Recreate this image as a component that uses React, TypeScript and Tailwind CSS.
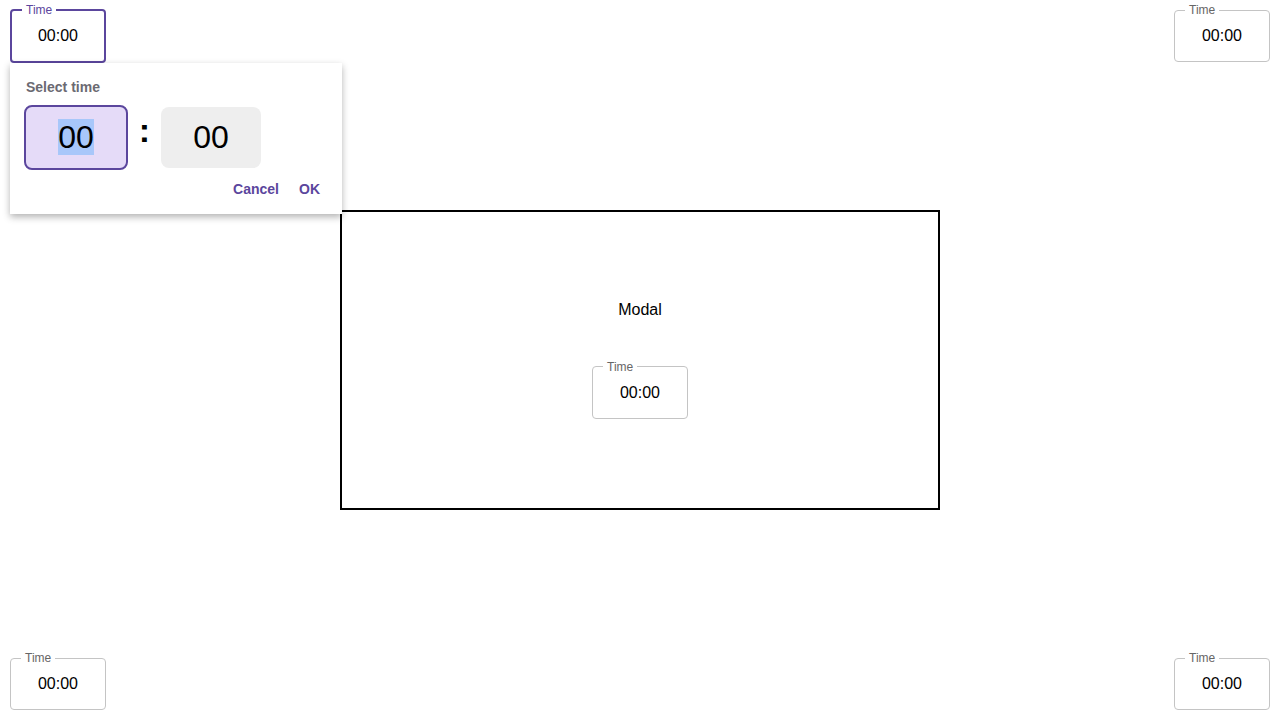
import React from 'react';

const PURPLE = 'text-[#5b469d]';

function TimeField({ active = false }: { active?: boolean }) {
  return (
    <fieldset
      className={`w-[96px] h-[59px] rounded-[4px] px-[10px] pt-[9px] pb-[13px] text-center ${
        active ? 'border-2 border-[#5b469d] px-[9px] h-[60px]' : 'border border-[#c4c4c4]'
      }`}
    >
      <legend className={`px-[4px] text-[12px] leading-[14px] text-left ${active ? PURPLE : 'text-[#666666]'}`}>
        Time
      </legend>
      <div className="text-[16px] leading-[20px] text-black">00:00</div>
    </fieldset>
  );
}

function TimePopup() {
  return (
    <div className="absolute left-0 top-[60px] z-10 w-[332px] bg-white shadow-[0_3px_7px_rgba(0,0,0,0.3)] pt-[16px] px-[14px] pb-[9px]">
      <div className="pl-[2px] text-[14px] leading-[16px] font-bold text-[#6b6a72]">Select time</div>
      <div className="mt-[10px] flex items-center">
        <div className="w-[104px] h-[65px] rounded-[8px] border-2 border-[#5b469d] bg-[#e5dbf8] flex items-center justify-center pb-[2px]">
          <span className="bg-[#a8c7fa] text-[32px] leading-[36px] text-black">00</span>
        </div>
        <div className="w-[33px] text-center text-[34px] leading-[36px] font-bold text-black pb-[16px]">:</div>
        <div className="w-[100px] h-[61px] rounded-[8px] bg-[#eeeeee] flex items-center justify-center pb-[2px]">
          <span className="text-[32px] leading-[36px] text-black">00</span>
        </div>
      </div>
      <div className="mt-[3px] flex justify-end gap-1">
        <button className={`h-8 px-2 text-[14px] font-bold ${PURPLE}`}>Cancel</button>
        <button className={`h-8 px-2 text-[14px] font-bold ${PURPLE}`}>OK</button>
      </div>
    </div>
  );
}

export default function App() {
  return (
    <div className="h-[720px] w-full bg-white flex flex-col pt-[3px] px-[10px] pb-[10px] font-['Liberation_Sans',Arial,sans-serif]">
      <div className="flex justify-between items-start">
        <div className="relative">
          <TimeField active />
          <TimePopup />
        </div>
        <TimeField />
      </div>

      <div className="mt-[147px] self-center w-[600px] h-[300px] border-2 border-black flex flex-col items-center justify-center pb-[2px]">
        <div className="text-[16px] leading-[20px] text-black">Modal</div>
        <div className="mt-[40px]">
          <TimeField />
        </div>
      </div>

      <div className="mt-auto flex justify-between items-end">
        <TimeField />
        <TimeField />
      </div>
    </div>
  );
}
